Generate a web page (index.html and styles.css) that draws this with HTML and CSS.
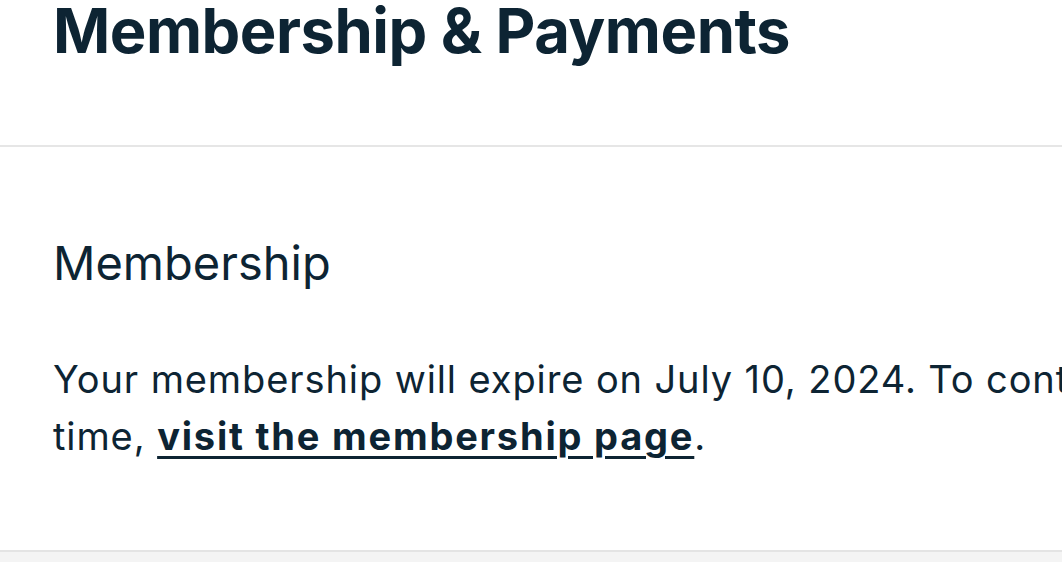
FILE: index.html
```html
<!DOCTYPE html>
<html lang="en">
<head>
    <meta charset="UTF-8">
    <meta name="viewport" content="width=device-width, initial-scale=1.0">
    <title>Membership &amp; Payments</title>
    <link rel="stylesheet" href="styles.css">
</head>
<body>
    <header class="page-header">
        <h1>Membership &amp; Payments</h1>
    </header>

    <section class="panel">
        <h2>Membership</h2>
        <p class="panel-text">
            Your membership will expire on July 10, 2024. To continue your membership beyond this
            time, <a href="#">visit the membership page</a>.
        </p>
    </section>

    <div class="panel-footer"></div>
</body>
</html>
```

FILE: styles.css
```css
html {
    overflow: hidden;
}

body {
    margin: 0;
    padding: 0;
    background-color: #fff;
    color: #0d2433;
    font-family: Inter, "Noto Sans", sans-serif;
    width: 2000px;
}

.page-header {
    padding: 0 53px;
    height: 145px;
    border-bottom: 2px solid #e6e6e6;
}

.page-header h1 {
    margin: 0;
    font-size: 61.5px;
    font-weight: 700;
    line-height: 62px;
    letter-spacing: -0.5px;
}

.panel {
    padding: 86px 53px 0;
    height: 317px;
    border-bottom: 2px solid #e4e4e4;
}

.panel h2 {
    margin: 0;
    font-size: 47px;
    font-weight: 400;
    line-height: 60px;
}

.panel-text {
    margin: 58px 0 0;
    width: 1765px;
    font-size: 38px;
    line-height: 57px;
    letter-spacing: 0.9px;
}

.panel-text a {
    color: inherit;
    font-weight: 700;
    letter-spacing: 1.8px;
    text-decoration: underline;
    text-decoration-thickness: 3px;
    text-underline-offset: 6px;
}

.panel-footer {
    height: 20px;
    background-color: #f4f4f4;
}
```
